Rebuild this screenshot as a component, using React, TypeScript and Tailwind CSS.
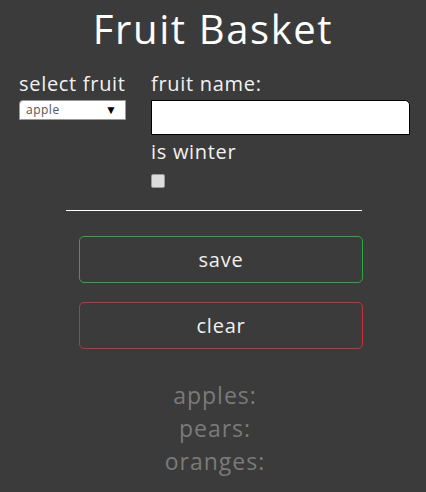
import React from "react";

export default function App() {
  const font = { fontFamily: '"Open Sans", "Lato", sans-serif' };
  return (
    <div className="min-h-[492px] w-full bg-[#3b3b3b] text-white" style={font}>
      <h1 className="pt-[4px] text-center text-[40px] leading-[50px] tracking-[1.6px] text-white">Fruit Basket</h1>
      <div className="mt-[18px] flex pl-[19px]">
        <div className="flex w-[132px] flex-col">
          <label className="text-[20px] leading-[24px] tracking-[0.7px] text-[#f2f2f2]">select fruit</label>
          <div className="mt-[4px] flex h-[20px] w-[107px] items-center justify-between rounded-tl-[4px] border border-[#999] bg-white pl-[6px] pr-[8px]">
            <span className="text-[12px] leading-none tracking-[0.5px] text-[#555]">apple</span>
            <span className="text-[12px] leading-none text-black">▼</span>
          </div>
        </div>
        <div className="flex w-[259px] flex-col">
          <label className="text-[20px] leading-[24px] tracking-[0.7px] text-[#f2f2f2]">fruit name:</label>
          <div className="mt-[4px] h-[35px] w-[259px] rounded-tr-[5px] border border-black bg-white" />
          <label className="mt-[5px] text-[20px] leading-[24px] tracking-[0.7px] text-[#f2f2f2]">is winter</label>
          <div className="mt-[10px] h-[14px] w-[14px] rounded-[2px] border border-[#999] bg-[#dcdcdc]" />
        </div>
      </div>
      <div className="ml-[66px] mt-[22px] h-px w-[296px] bg-white" />
      <div className="ml-[79px] mt-[25px] flex w-[284px] flex-col gap-[19px]">
        <div className="flex h-[47px] w-full items-center justify-center rounded-[5px] border border-solid border-[#2aa844] text-[20px] tracking-[0.8px] text-[#f0f0f0]">save</div>
        <div className="flex h-[47px] w-full items-center justify-center rounded-[5px] border border-solid border-[#c9303f] text-[20px] tracking-[0.8px] text-[#f0f0f0]">clear</div>
      </div>
      <div className="mt-[30px] flex flex-col items-center pl-[4px] text-[23px] leading-[33px] tracking-[1px] text-[#7a7a7a]">
        <div>apples:</div>
        <div>pears:</div>
        <div>oranges:</div>
      </div>
    </div>
  );
}
